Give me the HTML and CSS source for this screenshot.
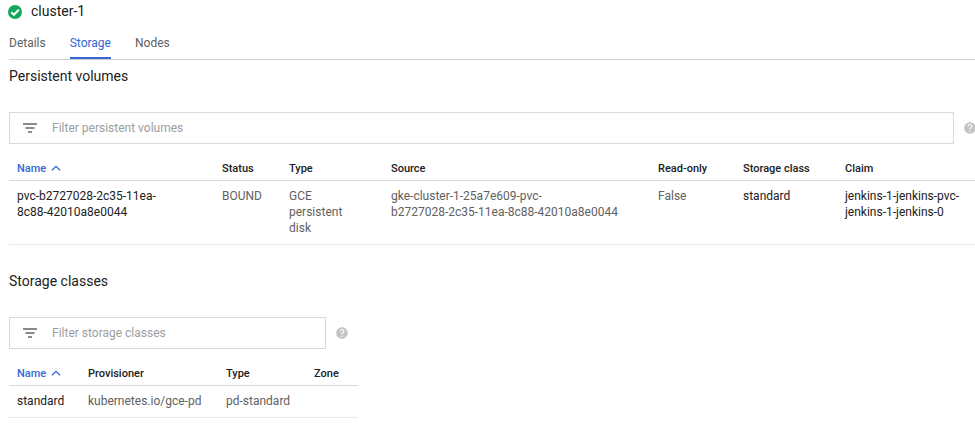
FILE: index.html
```html
<!DOCTYPE html>
<html lang="en">
<head>
<meta charset="utf-8">
<title>cluster-1</title>
<link rel="stylesheet" href="styles.css">
</head>
<body>
<header class="title-row">
  <svg class="status-icon" viewBox="0 0 14 14" width="14" height="14"><circle cx="7" cy="7" r="7" fill="#12a75c"/><path fill="none" stroke="#fff" stroke-width="2" d="M3.300 7.200l2.600 2.600 4.900-5"/></svg>
  <h1 class="cluster-name">cluster-1</h1>
</header>
<nav class="tabs">
  <a class="tab">Details</a>
  <a class="tab active">Storage</a>
  <a class="tab">Nodes</a>
</nav>
<h2 class="section-title first">Persistent volumes</h2>
<div class="filter-row">
  <div class="filter-box">
    <svg class="filter-icon" viewBox="0 0 14 10" width="14" height="10"><path fill="#8a8a8a" d="M0 0h14v2H0zM2.500 4h9v2h-9zM5 8h4v2H5z"/></svg>
    <span class="filter-text">Filter persistent volumes</span>
  </div>
  <svg class="help-icon" viewBox="0 0 24 24" width="14" height="14"><path fill="#c4c4c4" d="M12 2C6.480 2 2 6.480 2 12s4.480 10 10 10 10-4.480 10-10S17.520 2 12 2zm1 17h-2v-2h2v2zm2.070-7.750l-.9.920C13.450 12.900 13 13.500 13 15h-2v-.5c0-1.100.45-2.100 1.170-2.830l1.240-1.260c.37-.36.590-.86.590-1.410 0-1.100-.9-2-2-2s-2 .9-2 2H8c0-2.210 1.790-4 4-4s4 1.790 4 4c0 .88-.36 1.680-.93 2.250z"/></svg>
</div>
<table class="data-table pv-table">
  <thead>
    <tr>
      <th class="sorted">Name <svg class="sort-icon" viewBox="0 0 10 6" width="10" height="6"><path fill="none" stroke="#3367d6" stroke-width="1.300" d="M1 5.300l4-4 4 4"/></svg></th>
      <th>Status</th><th>Type</th><th>Source</th><th>Read-only</th><th>Storage class</th><th>Claim</th>
    </tr>
  </thead>
  <tbody>
    <tr>
      <td class="strong">pvc-b2727028-2c35-11ea-<br>8c88-42010a8e0044</td>
      <td>BOUND</td>
      <td>GCE<br>persistent<br>disk</td>
      <td>gke-cluster-1-25a7e609-pvc-<br>b2727028-2c35-11ea-8c88-42010a8e0044</td>
      <td>False</td>
      <td class="strong">standard</td>
      <td class="strong">jenkins-1-jenkins-pvc-<br>jenkins-1-jenkins-0</td>
    </tr>
  </tbody>
</table>
<h2 class="section-title second">Storage classes</h2>
<div class="filter-row narrow">
  <div class="filter-box">
    <svg class="filter-icon" viewBox="0 0 14 10" width="14" height="10"><path fill="#8a8a8a" d="M0 0h14v2H0zM2.500 4h9v2h-9zM5 8h4v2H5z"/></svg>
    <span class="filter-text">Filter storage classes</span>
  </div>
  <svg class="help-icon" viewBox="0 0 24 24" width="14" height="14"><path fill="#c4c4c4" d="M12 2C6.480 2 2 6.480 2 12s4.480 10 10 10 10-4.480 10-10S17.520 2 12 2zm1 17h-2v-2h2v2zm2.070-7.750l-.9.920C13.450 12.900 13 13.500 13 15h-2v-.5c0-1.100.45-2.100 1.170-2.830l1.240-1.260c.37-.36.590-.86.590-1.410 0-1.100-.9-2-2-2s-2 .9-2 2H8c0-2.210 1.790-4 4-4s4 1.790 4 4c0 .88-.36 1.680-.93 2.250z"/></svg>
</div>
<table class="data-table sc-table">
  <thead>
    <tr>
      <th class="sorted">Name <svg class="sort-icon" viewBox="0 0 10 6" width="10" height="6"><path fill="none" stroke="#3367d6" stroke-width="1.300" d="M1 5.300l4-4 4 4"/></svg></th>
      <th>Provisioner</th><th>Type</th><th>Zone</th>
    </tr>
  </thead>
  <tbody>
    <tr>
      <td class="strong">standard</td>
      <td>kubernetes.io/gce-pd</td>
      <td>pd-standard</td>
      <td></td>
    </tr>
  </tbody>
</table>
</body>
</html>
```
FILE: styles.css
```css
html, body { margin: 0; padding: 0; background: #fff; }
body {
  font-family: Roboto, "Liberation Sans", sans-serif;
  font-size: 12px;
  color: #212121;
  height: 434px;
  overflow: hidden;
  padding-left: 9px;
}
.title-row {
  display: flex;
  align-items: center;
  height: 22px;
  gap: 9px;
  margin-left: -1px;
}
.status-icon { margin-top: 1px; flex: none; }
.cluster-name {
  margin: 0;
  font-size: 14px;
  font-weight: 400;
  line-height: 22px;
  color: #212121;
}
.tabs {
  display: flex;
  gap: 24px;
  height: 37px;
  border-bottom: 1px solid #d0d0d0;
}
.tab {
  font-size: 12px;
  color: #616161;
  line-height: 16px;
  padding-top: 13px;
  box-sizing: border-box;
  height: 37px;
}
.tab.active {
  color: #3367d6;
  border-bottom: 2px solid #3367d6;
}
.section-title {
  margin: 0;
  font-size: 14px;
  font-weight: 400;
  line-height: 20px;
  color: #212121;
}
.section-title.first { padding-top: 6px; }
.section-title.second { padding-top: 26px; }
.filter-row {
  display: flex;
  align-items: center;
  gap: 9px;
  margin-top: 26px;
}
.filter-box {
  display: flex;
  align-items: center;
  box-sizing: border-box;
  width: 945px;
  height: 32px;
  border: 1px solid #d9d9d9;
  padding-left: 13px;
  gap: 15px;
  flex: none;
}
.narrow .filter-box { width: 317px; }
.filter-text { color: #9e9e9e; font-size: 12px; }
.help-icon { flex: none; }
.data-table {
  border-collapse: collapse;
  table-layout: fixed;
  margin-top: 11px;
}
.pv-table { width: 966px; }
.sc-table { width: 349px; margin-top: 12px; }
.data-table th {
  font-size: 11px;
  font-weight: 500;
  color: #212121;
  text-align: left;
  height: 25px;
  padding: 2px 8px 0;
  box-sizing: border-box;
  border-bottom: 1px solid #d9d9d9;
  white-space: nowrap;
}
.data-table th.sorted { color: #3367d6; }
.sort-icon { margin-left: 2px; vertical-align: 1px; }
.data-table td {
  font-size: 12px;
  line-height: 16px;
  color: #616161;
  vertical-align: top;
  padding: 7px 8px 8px;
  border-bottom: 1px solid #e8e8e8;
}
.data-table td.strong { color: #212121; }
.pv-table th:nth-child(1) { width: 205px; }
.pv-table th:nth-child(2) { width: 67px; }
.pv-table th:nth-child(3) { width: 102px; }
.pv-table th:nth-child(4) { width: 267px; }
.pv-table th:nth-child(5) { width: 85px; }
.pv-table th:nth-child(6) { width: 102px; }
.pv-table th:nth-child(7) { width: 138px; }
.sc-table th:nth-child(1) { width: 71px; }
.sc-table th:nth-child(2) { width: 138px; }
.sc-table th:nth-child(3) { width: 88px; }
.sc-table th:nth-child(4) { width: 52px; }
```
